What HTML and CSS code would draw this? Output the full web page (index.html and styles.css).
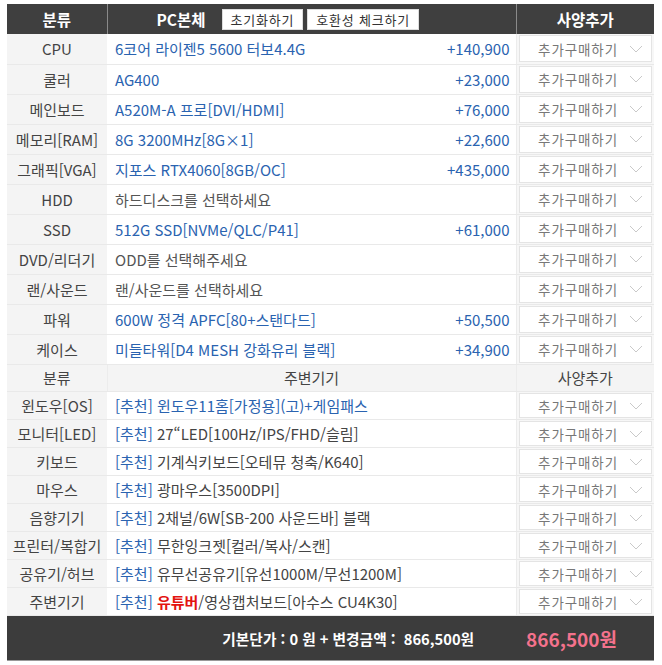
FILE: index.html
```html
<!DOCTYPE html>
<html lang="ko">
<head>
  <meta charset="UTF-8" />
  <title>PC 견적</title>
  <link rel="stylesheet" href="styles.css">
</head>
<body>
  <table class="estimate">
    <colgroup>
      <col class="c-cat" />
      <col class="c-item" />
      <col class="c-opt" />
    </colgroup>
    <thead>
      <tr class="head">
        <th>분류</th>
        <th class="head-item">
          <div class="head-group">
            <span class="head-title">PC본체</span>
            <button class="btn">초기화하기</button>
            <button class="btn">호환성 체크하기</button>
          </div>
        </th>
        <th>사양추가</th>
      </tr>
    </thead>
    <tbody class="pc">
      <tr><td class="cat">CPU</td><td class="item"><div class="line"><span class="name">6코어 라이젠5 5600 터보4.4G</span><span class="price">+140,900</span></div></td><td class="opt"><div class="sel">추가구매하기<svg viewBox="0 0 14 8"><polyline points="1,1 7,7 13,1" /></svg></div></td></tr>
      <tr><td class="cat">쿨러</td><td class="item"><div class="line"><span class="name">AG400</span><span class="price">+23,000</span></div></td><td class="opt"><div class="sel">추가구매하기<svg viewBox="0 0 14 8"><polyline points="1,1 7,7 13,1" /></svg></div></td></tr>
      <tr><td class="cat">메인보드</td><td class="item"><div class="line"><span class="name">A520M-A 프로[DVI/HDMI]</span><span class="price">+76,000</span></div></td><td class="opt"><div class="sel">추가구매하기<svg viewBox="0 0 14 8"><polyline points="1,1 7,7 13,1" /></svg></div></td></tr>
      <tr><td class="cat">메모리[RAM]</td><td class="item"><div class="line"><span class="name">8G 3200MHz[8G×1]</span><span class="price">+22,600</span></div></td><td class="opt"><div class="sel">추가구매하기<svg viewBox="0 0 14 8"><polyline points="1,1 7,7 13,1" /></svg></div></td></tr>
      <tr><td class="cat">그래픽[VGA]</td><td class="item"><div class="line"><span class="name">지포스 RTX4060[8GB/OC]</span><span class="price">+435,000</span></div></td><td class="opt"><div class="sel">추가구매하기<svg viewBox="0 0 14 8"><polyline points="1,1 7,7 13,1" /></svg></div></td></tr>
      <tr><td class="cat">HDD</td><td class="item"><div class="line"><span class="name empty">하드디스크를 선택하세요</span></div></td><td class="opt"><div class="sel">추가구매하기<svg viewBox="0 0 14 8"><polyline points="1,1 7,7 13,1" /></svg></div></td></tr>
      <tr><td class="cat">SSD</td><td class="item"><div class="line"><span class="name">512G SSD[NVMe/QLC/P41]</span><span class="price">+61,000</span></div></td><td class="opt"><div class="sel">추가구매하기<svg viewBox="0 0 14 8"><polyline points="1,1 7,7 13,1" /></svg></div></td></tr>
      <tr><td class="cat">DVD/리더기</td><td class="item"><div class="line"><span class="name empty">ODD를 선택해주세요</span></div></td><td class="opt"><div class="sel">추가구매하기<svg viewBox="0 0 14 8"><polyline points="1,1 7,7 13,1" /></svg></div></td></tr>
      <tr><td class="cat">랜/사운드</td><td class="item"><div class="line"><span class="name empty">랜/사운드를 선택하세요</span></div></td><td class="opt"><div class="sel">추가구매하기<svg viewBox="0 0 14 8"><polyline points="1,1 7,7 13,1" /></svg></div></td></tr>
      <tr><td class="cat">파워</td><td class="item"><div class="line"><span class="name">600W 정격 APFC[80+스탠다드]</span><span class="price">+50,500</span></div></td><td class="opt"><div class="sel">추가구매하기<svg viewBox="0 0 14 8"><polyline points="1,1 7,7 13,1" /></svg></div></td></tr>
      <tr><td class="cat">케이스</td><td class="item"><div class="line"><span class="name">미들타워[D4 MESH 강화유리 블랙]</span><span class="price">+34,900</span></div></td><td class="opt"><div class="sel">추가구매하기<svg viewBox="0 0 14 8"><polyline points="1,1 7,7 13,1" /></svg></div></td></tr>
    </tbody>
    <tbody class="extra">
      <tr class="subhead"><td>분류</td><td>주변기기</td><td>사양추가</td></tr>
      <tr><td class="cat">윈도우[OS]</td><td class="item"><span class="rec">[추천]</span> <span class="rec">윈도우11홈[가정용](고)+게임패스</span></td><td class="opt"><div class="sel">추가구매하기<svg viewBox="0 0 14 8"><polyline points="1,1 7,7 13,1" /></svg></div></td></tr>
      <tr><td class="cat">모니터[LED]</td><td class="item"><span class="rec">[추천]</span> 27“LED[100Hz/IPS/FHD/슬림]</td><td class="opt"><div class="sel">추가구매하기<svg viewBox="0 0 14 8"><polyline points="1,1 7,7 13,1" /></svg></div></td></tr>
      <tr><td class="cat">키보드</td><td class="item"><span class="rec">[추천]</span> 기계식키보드[오테뮤 청축/K640]</td><td class="opt"><div class="sel">추가구매하기<svg viewBox="0 0 14 8"><polyline points="1,1 7,7 13,1" /></svg></div></td></tr>
      <tr><td class="cat">마우스</td><td class="item"><span class="rec">[추천]</span> 광마우스[3500DPI]</td><td class="opt"><div class="sel">추가구매하기<svg viewBox="0 0 14 8"><polyline points="1,1 7,7 13,1" /></svg></div></td></tr>
      <tr><td class="cat">음향기기</td><td class="item"><span class="rec">[추천]</span> 2채널/6W[SB-200 사운드바] 블랙</td><td class="opt"><div class="sel">추가구매하기<svg viewBox="0 0 14 8"><polyline points="1,1 7,7 13,1" /></svg></div></td></tr>
      <tr><td class="cat">프린터/복합기</td><td class="item"><span class="rec">[추천]</span> 무한잉크젯[컬러/복사/스캔]</td><td class="opt"><div class="sel">추가구매하기<svg viewBox="0 0 14 8"><polyline points="1,1 7,7 13,1" /></svg></div></td></tr>
      <tr><td class="cat">공유기/허브</td><td class="item"><span class="rec">[추천]</span> 유무선공유기[유선1000M/무선1200M]</td><td class="opt"><div class="sel">추가구매하기<svg viewBox="0 0 14 8"><polyline points="1,1 7,7 13,1" /></svg></div></td></tr>
      <tr><td class="cat">주변기기</td><td class="item"><span class="rec">[추천]</span> <b class="hot">유튜버</b>/영상캡처보드[아수스 CU4K30]</td><td class="opt"><div class="sel">추가구매하기<svg viewBox="0 0 14 8"><polyline points="1,1 7,7 13,1" /></svg></div></td></tr>
    </tbody>
  </table>
  <div class="total">
    <span class="total-text">기본단가 : 0 원 + 변경금액 :&nbsp; 866,500원</span>
    <span class="total-sum">866,500원</span>
  </div>
</body>
</html>
```

FILE: styles.css
```css
body {
  margin: 0;
  padding: 4px 8px 0 7px;
  background: #fff;
  font-family: 'Noto Sans CJK KR', 'Noto Sans', sans-serif;
  color: #444;
}
.estimate {
  width: 647px;
  border-collapse: collapse;
  table-layout: fixed;
  font-size: 15px;
}
.c-cat { width: 100px; }
.c-opt { width: 138px; }

.head th {
  background: #3f3f3f;
  color: #fff;
  font-weight: 700;
  font-size: 15.5px;
  height: 30px;
  padding: 0;
  border-left: 1px solid #8a8a8a;
}
.head th:first-child { border-left: none; }
.head .head-item { text-align: left; }
.head-group {
  display: flex;
  align-items: center;
  padding-left: 49px;
  gap: 4px;
}
.head-title { margin-right: 12px; }
.btn {
  font-family: 'Noto Sans CJK KR', sans-serif;
  font-size: 13px;
  letter-spacing: 0.8px;
  color: #333;
  background: #fff;
  border: 1px solid #ddd;
  height: 21px;
  padding: 0 8px;
  line-height: 19px;
}

td {
  padding: 0;
  border-bottom: 1px solid #e9e9e9;
  vertical-align: middle;
}
.pc tr { height: 30px; }
.extra tr { height: 27.5px; }
.cat {
  background: #f4f4f4;
  text-align: center;
  color: #444;
  white-space: nowrap;
}
.item {
  padding-left: 8px;
  padding-right: 6px;
  white-space: nowrap;
  color: #444;
}
.line {
  display: flex;
  justify-content: space-between;
}
.name, .price, .rec { color: #2a63b0; }
.name.empty { color: #555; }
.hot { color: #e3140f; font-weight: 700; }

.opt {
  background: #f7f7f7;
  padding: 1px 2px;
  border-left: 1px solid #ececec;
}
.sel {
  display: flex;
  align-items: center;
  justify-content: flex-end;
  gap: 11px;
  height: 25px;
  padding-right: 8px;
  background: #fff;
  border: 1px solid #e4e4e4;
  color: #777;
  font-size: 13.5px;
  letter-spacing: 0.9px;
}
.extra .sel { height: 23px; }
.sel svg {
  width: 14px;
  height: 8px;
  fill: none;
  stroke: #c9c9c9;
  stroke-width: 1;
}

.subhead td {
  background: #f4f4f4;
  text-align: center;
  color: #444;
  border-left: 1px solid #ececec;
}
.subhead td:first-child { border-left: none; }

.total {
  width: 647px;
  height: 45px;
  background: #3c3c3c;
  border-bottom: 1px solid #999;
  box-sizing: border-box;
  display: flex;
  align-items: center;
  justify-content: flex-end;
  padding-right: 37px;
  gap: 52px;
}
.total-text {
  color: #fff;
  font-weight: 700;
  font-size: 14.7px;
}
.total-sum {
  color: #f4728c;
  font-weight: 700;
  font-size: 19px;
}
```
